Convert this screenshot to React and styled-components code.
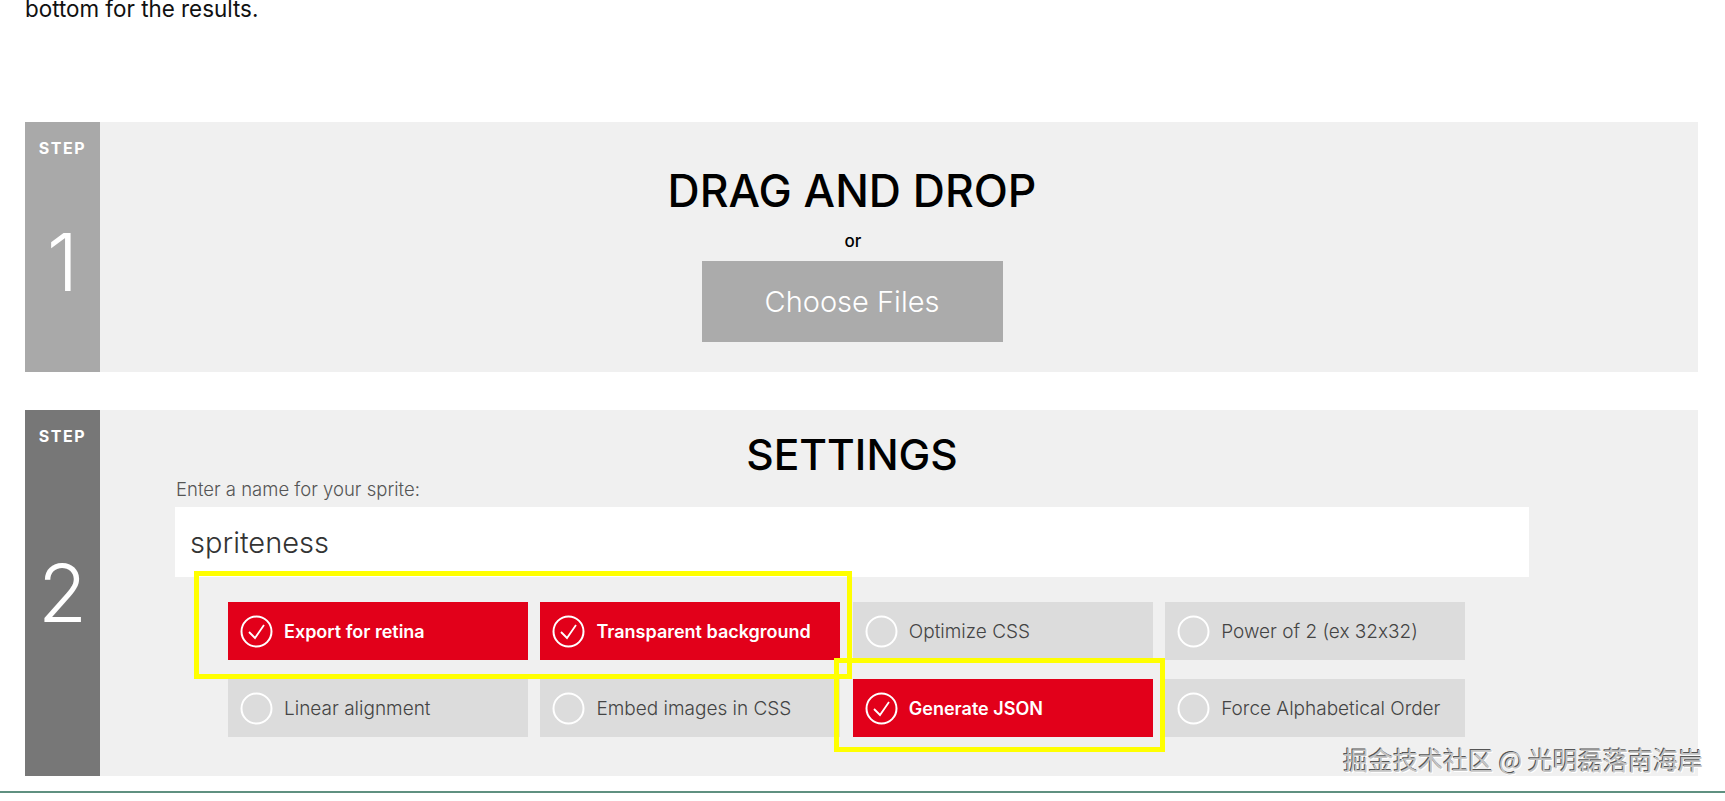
import styled, { createGlobalStyle } from 'styled-components'

const Global = createGlobalStyle`
  html, body {
    margin: 0;
    height: 801px;
    overflow: hidden;
    background: #fff;
    font-family: 'Inter', 'Liberation Sans', sans-serif;
    font-feature-settings: 'calt' 0;
  }
`

const Page = styled.div`
  position: relative;
  height: 799px;
  padding: 0 27px 0 25px;
  box-sizing: border-box;
  border-bottom: 2px solid #5f9080;
`

const Intro = styled.p`
  margin: -6px 0 0;
  height: 128px;
  font-size: 22.4px;
  line-height: 30px;
  color: #111;
`

const Step = styled.section`
  display: flex;
  height: ${(props) => props.$height}px;
  margin-bottom: 38px;
  background: #f0f0f0;
`

const Side = styled.div`
  position: relative;
  flex: 0 0 75px;
  display: flex;
  align-items: center;
  justify-content: center;
  background: ${(props) => props.$color};
  color: #fff;
`

const StepLabel = styled.span`
  position: absolute;
  top: 16px;
  left: 0;
  right: 0;
  text-align: center;
  font-size: 16px;
  line-height: 20px;
  font-weight: 700;
  letter-spacing: 1.6px;
`

const StepNumber = styled.span`
  font-size: 80px;
  line-height: 80px;
  font-weight: 300;
  margin-top: ${(props) => props.$offset}px;
`

const Body = styled.div`
  width: 1354px;
  margin-left: 75px;
  display: flex;
  flex-direction: column;
  align-items: center;
`

const Title = styled.h2`
  margin: ${(props) => props.$top}px 0 0;
  font-size: ${(props) => props.$size}px;
  line-height: 50px;
  font-weight: 500;
  color: #000;
`

const Or = styled.div`
  margin: 15px 0 0 2px;
  font-size: 17px;
  line-height: 20px;
  font-weight: 500;
  color: #000;
`

const ChooseButton = styled.button`
  margin-top: 10px;
  width: 301px;
  height: 81px;
  border: 0;
  background: #ababab;
  color: #fff;
  font-family: inherit;
  font-size: 29px;
  font-weight: 300;
`

const NameLabel = styled.label`
  align-self: flex-start;
  margin-top: -3px;
  margin-left: 1px;
  font-size: 18.5px;
  line-height: 24px;
  font-weight: 300;
  color: #555;
`

const NameInput = styled.div`
  align-self: stretch;
  margin-top: 6px;
  height: 70px;
  padding-left: 15px;
  display: flex;
  align-items: center;
  background: #fff;
  font-size: 29px;
  font-weight: 300;
  color: #333;
`

const Options = styled.div`
  position: relative;
  align-self: flex-start;
  margin: 25px 0 0 53px;
  display: grid;
  grid-template-columns: repeat(4, 300px);
  grid-auto-rows: 58px;
  column-gap: 12.4px;
  row-gap: 19px;
`

const Option = styled.div`
  display: flex;
  align-items: center;
  gap: 11px;
  padding-left: 12px;
  background: ${(props) => (props.$on ? '#e2001a' : '#dcdcdc')};
  color: ${(props) => (props.$on ? '#fff' : '#444')};
  font-size: ${(props) => (props.$on ? 18 : 19)}px;
  font-weight: ${(props) => (props.$on ? 600 : 300)};
`

const Tick = styled.svg`
  flex: none;
  width: 33px;
  height: 33px;
`

const Highlight = styled.div`
  position: absolute;
  left: ${(props) => props.$left}px;
  top: ${(props) => props.$top}px;
  width: ${(props) => props.$width}px;
  height: ${(props) => props.$height}px;
  box-sizing: border-box;
  border: 5px solid #ffff00;
  pointer-events: none;
`

const Watermark = styled.div`
  position: absolute;
  right: 22px;
  top: 749px;
  font-family: 'Noto Sans CJK SC', sans-serif;
  font-size: 25px;
  line-height: 32px;
  color: #c4c4c4;
  text-shadow: -1px -1px 0 #555, 1px 1px 0 #fff;
  white-space: nowrap;
`

const options = [
  ['Export for retina', true],
  ['Transparent background', true],
  ['Optimize CSS', false],
  ['Power of 2 (ex 32x32)', false],
  ['Linear alignment', false],
  ['Embed images in CSS', false],
  ['Generate JSON', true],
  ['Force Alphabetical Order', false],
]

const Check = ({ on }) => (
  <Tick viewBox="0 0 33 33" fill="none" stroke="#fff">
    <circle cx="16.5" cy="16.5" r="15" strokeWidth="2" />
    {on && <path d="M9 17l6 6 9-13" strokeWidth="1.8" />}
  </Tick>
)

export default function App() {
  return (
    <>
      <Global />
      <Page>
        <Intro>bottom for the results.</Intro>
        <Step $height={250}>
          <Side $color="#a9a9a9">
            <StepLabel>STEP</StepLabel>
            <StepNumber $offset={30}>1</StepNumber>
          </Side>
          <Body>
            <Title $top={44} $size={44.5}>DRAG AND DROP</Title>
            <Or>or</Or>
            <ChooseButton>Choose Files</ChooseButton>
          </Body>
        </Step>
        <Step $height={366}>
          <Side $color="#777">
            <StepLabel>STEP</StepLabel>
            <StepNumber $offset={0}>2</StepNumber>
          </Side>
          <Body>
            <Title $top={20} $size={42.5}>SETTINGS</Title>
            <NameLabel>Enter a name for your sprite:</NameLabel>
            <NameInput>spriteness</NameInput>
            <Options>
              {options.map(([label, on]) => (
                <Option key={label} $on={on}>
                  <Check on={on} />
                  {label}
                </Option>
              ))}
              <Highlight $left={-34} $top={-31} $width={658} $height={108} />
              <Highlight $left={606} $top={56} $width={331} $height={94} />
            </Options>
          </Body>
        </Step>
        <Watermark>掘金技术社区 @ 光明磊落南海岸</Watermark>
      </Page>
    </>
  )
}
